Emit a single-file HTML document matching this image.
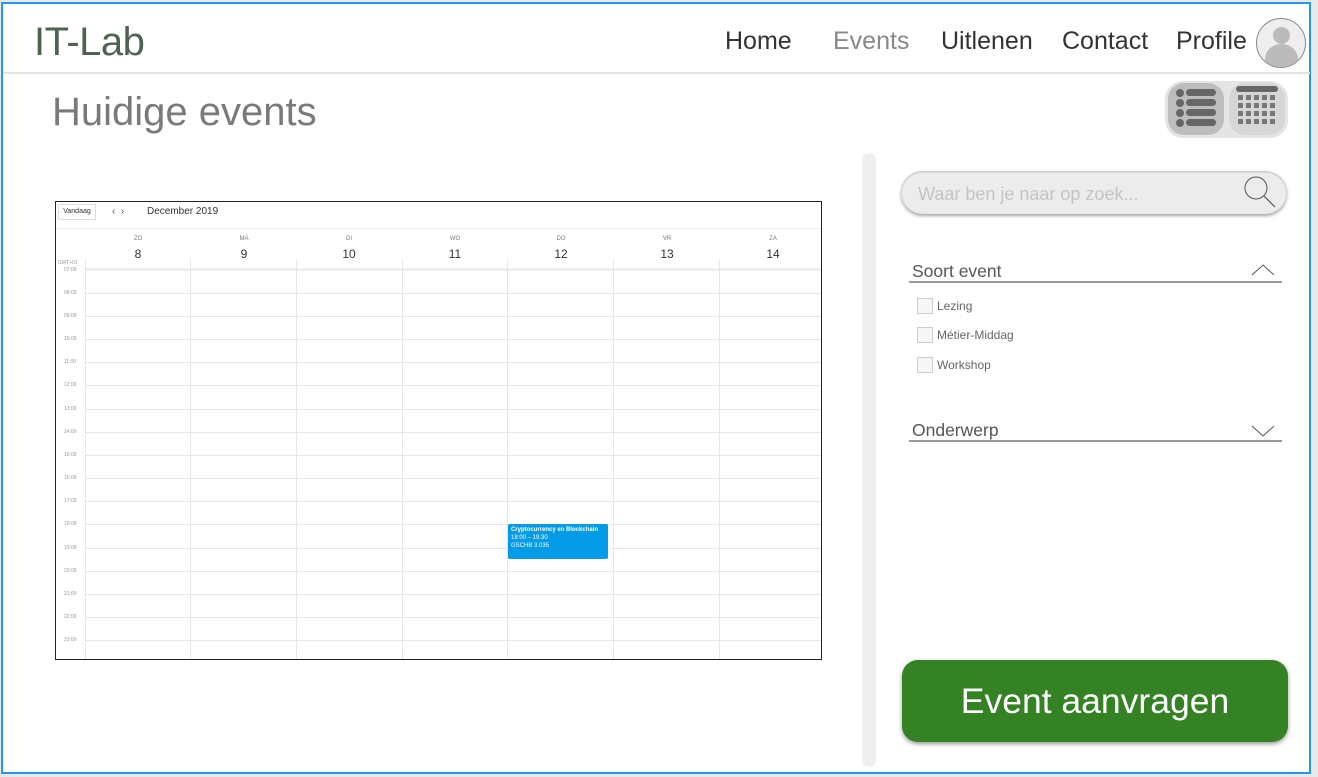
<!DOCTYPE html>
<html><head><meta charset="utf-8"><style>
*{margin:0;padding:0;box-sizing:border-box}
body{width:1318px;height:777px;background:#e9e9e9;font-family:"Liberation Sans",Roboto,sans-serif;position:relative;overflow:hidden}
.frame{position:absolute;left:1px;top:2px;width:1310px;height:772px;background:#fff;border:2px solid #2196f3}
.a{position:absolute}
.nav{font-size:25px;color:#333;top:27px}
.cal{left:55px;top:201px;width:767px;height:459px;border:1px solid #222;background:#fff}
.hl{position:absolute;left:30px;right:0;height:1px;background:#e6e6e6}
.vl{position:absolute;top:57px;bottom:0;width:1px;background:#e6e6e6}
.t{position:absolute;left:8px;font-size:5px;color:#999}
.dn{position:absolute;font-size:6px;color:#777;width:40px;text-align:center;top:34px}
.dd{position:absolute;font-size:12px;color:#333;width:40px;text-align:center;top:45px}
.cb{position:absolute;left:917px;width:16px;height:16px;border:1px solid #ccc;background:#f7f7f7}
.cl{position:absolute;left:937px;font-size:12px;color:#666}
</style></head><body>
<div class="frame"></div>
<div class="a" style="left:34px;top:20px;font-size:40px;color:#4f6450;letter-spacing:-0.5px;">IT-Lab</div>
<div class="a nav" style="left:725px">Home</div>
<div class="a nav" style="left:833px;color:#888">Events</div>
<div class="a nav" style="left:941px">Uitlenen</div>
<div class="a nav" style="left:1062px">Contact</div>
<div class="a nav" style="left:1176px">Profile</div>
<div class="a" style="left:1256px;top:18px;width:50px;height:50px;border-radius:50%;border:1px solid #888;background:#eee;overflow:hidden">
<div class="a" style="left:16px;top:8px;width:17px;height:17px;border-radius:50%;background:#bbb"></div>
<div class="a" style="left:8px;top:25px;width:33px;height:30px;border-radius:50% 50% 0 0;background:#bbb"></div></div>
<div class="a" style="left:3px;top:72px;width:1307px;height:2px;background:#e3e3e3"></div>
<div class="a" style="left:52px;top:90px;font-size:40px;color:#7a7a7a">Huidige events</div>
<div class="a" style="left:1165px;top:81px;width:123px;height:57px;border-radius:18px;background:#e4e4e4"></div>
<div class="a" style="left:1168px;top:83px;width:56px;height:52px;border-radius:16px;background:#bdbdbd"></div>
<div class="a" style="left:1229px;top:83px;width:56px;height:52px;border-radius:16px;background:#d6d6d6"></div>
<svg class="a" style="left:1172px;top:86px" width="50" height="46"><g fill="#666"><circle cx="8" cy="7" r="4"/><circle cx="8" cy="17" r="4"/><circle cx="8" cy="27" r="4"/><circle cx="8" cy="37" r="4"/><rect x="14" y="3" width="30" height="7" rx="3.5"/><rect x="14" y="13" width="30" height="7" rx="3.5"/><rect x="14" y="23" width="30" height="7" rx="3.5"/><rect x="14" y="33" width="30" height="7" rx="3.5"/></g></svg>
<svg class="a" style="left:1234px;top:86px" width="46" height="46"><rect x="2" y="0" width="42" height="6" rx="3" fill="#666"/><g fill="#777">
<rect x="4" y="9" width="5" height="5"/><rect x="12" y="9" width="5" height="5"/><rect x="20" y="9" width="5" height="5"/><rect x="28" y="9" width="5" height="5"/><rect x="36" y="9" width="5" height="5"/>
<rect x="4" y="17" width="5" height="5"/><rect x="12" y="17" width="5" height="5"/><rect x="20" y="17" width="5" height="5"/><rect x="28" y="17" width="5" height="5"/><rect x="36" y="17" width="5" height="5"/>
<rect x="4" y="25" width="5" height="5"/><rect x="12" y="25" width="5" height="5"/><rect x="20" y="25" width="5" height="5"/><rect x="28" y="25" width="5" height="5"/><rect x="36" y="25" width="5" height="5"/>
<rect x="4" y="33" width="5" height="5"/><rect x="12" y="33" width="5" height="5"/><rect x="20" y="33" width="5" height="5"/><rect x="28" y="33" width="5" height="5"/><rect x="36" y="33" width="5" height="5"/></g></svg>

<div class="a cal">
<div class="a" style="left:2px;top:2px;width:38px;height:16px;border:1px solid #ddd;font-size:7px;color:#333;text-align:center;line-height:14px">Vandaag</div>
<div class="a" style="left:56px;top:4px;font-size:10px;color:#555">‹ &nbsp;›</div>
<div class="a" style="left:91px;top:4px;font-size:10px;color:#333">December 2019</div>
<div class="a" style="left:0;right:0;top:26px;height:1px;background:#eee"></div>
<div class="dn" style="left:62px">ZO</div><div class="dd" style="left:62px">8</div>
<div class="dn" style="left:168px">MA</div><div class="dd" style="left:168px">9</div>
<div class="dn" style="left:273px">DI</div><div class="dd" style="left:273px">10</div>
<div class="dn" style="left:379px">WO</div><div class="dd" style="left:379px">11</div>
<div class="dn" style="left:485px">DO</div><div class="dd" style="left:485px">12</div>
<div class="dn" style="left:591px">VR</div><div class="dd" style="left:591px">13</div>
<div class="dn" style="left:697px">ZA</div><div class="dd" style="left:697px">14</div>
<div class="t" style="left:2px;top:58px">GMT+01</div>
<div class="a" style="left:30px;right:0;top:66px;height:3px;background:#eee"></div>
<div class="vl" style="left:29px"></div><div class="vl" style="left:134px"></div><div class="vl" style="left:240px"></div><div class="vl" style="left:346px"></div><div class="vl" style="left:451px"></div><div class="vl" style="left:557px"></div><div class="vl" style="left:663px"></div>
<div class="t" style="top:65px">07:00</div>
<div class="hl" style="top:91px"></div><div class="t" style="top:88px">08:00</div>
<div class="hl" style="top:114px"></div><div class="t" style="top:111px">09:00</div>
<div class="hl" style="top:137px"></div><div class="t" style="top:134px">10:00</div>
<div class="hl" style="top:160px"></div><div class="t" style="top:157px">11:00</div>
<div class="hl" style="top:183px"></div><div class="t" style="top:180px">12:00</div>
<div class="hl" style="top:207px"></div><div class="t" style="top:204px">13:00</div>
<div class="hl" style="top:230px"></div><div class="t" style="top:227px">14:00</div>
<div class="hl" style="top:253px"></div><div class="t" style="top:250px">15:00</div>
<div class="hl" style="top:276px"></div><div class="t" style="top:273px">16:00</div>
<div class="hl" style="top:299px"></div><div class="t" style="top:296px">17:00</div>
<div class="hl" style="top:322px"></div><div class="t" style="top:319px">18:00</div>
<div class="hl" style="top:346px"></div><div class="t" style="top:343px">19:00</div>
<div class="hl" style="top:369px"></div><div class="t" style="top:366px">20:00</div>
<div class="hl" style="top:392px"></div><div class="t" style="top:389px">21:00</div>
<div class="hl" style="top:415px"></div><div class="t" style="top:412px">22:00</div>
<div class="hl" style="top:438px"></div><div class="t" style="top:435px">23:00</div>
<div class="a" style="left:452px;top:322px;width:100px;height:35px;background:#039be5;border-radius:2px;color:#fff;font-size:6px;line-height:8px;padding:2px 3px"><b>Cryptocurrency en Blockchain</b><br>18:00 – 19:30<br>GSCHB 3.035</div>
</div>

<div class="a" style="left:862px;top:153px;width:14px;height:614px;border-radius:7px;background:#efefef"></div>
<div class="a" style="left:901px;top:171px;width:386px;height:43px;border-radius:22px;background:#ececec;box-shadow:0 2px 3px rgba(0,0,0,.35),inset 0 1px 2px rgba(0,0,0,.2)"></div>
<div class="a" style="left:918px;top:184px;font-size:18px;color:#c4c4c4">Waar ben je naar op zoek...</div>
<svg class="a" style="left:1240px;top:173px" width="40" height="36"><circle cx="16" cy="15" r="11" fill="none" stroke="#555" stroke-width="1"/><line x1="24" y1="23" x2="35" y2="34" stroke="#555" stroke-width="1.2"/></svg>
<div class="a" style="left:912px;top:261px;font-size:17.5px;color:#555">Soort event</div>
<svg class="a" style="left:1250px;top:263px" width="26" height="14"><polyline points="2,12 13,2 24,12" fill="none" stroke="#555" stroke-width="1"/></svg>
<div class="a" style="left:909px;top:281px;width:373px;height:2px;background:#9a9a9a"></div>
<div class="cb" style="top:298px"></div><div class="cl" style="top:299px">Lezing</div>
<div class="cb" style="top:327px"></div><div class="cl" style="top:328px">Métier-Middag</div>
<div class="cb" style="top:357px"></div><div class="cl" style="top:358px">Workshop</div>
<div class="a" style="left:912px;top:420px;font-size:17.5px;color:#555">Onderwerp</div>
<svg class="a" style="left:1250px;top:424px" width="26" height="14"><polyline points="2,2 13,12 24,2" fill="none" stroke="#555" stroke-width="1"/></svg>
<div class="a" style="left:909px;top:440px;width:373px;height:2px;background:#9a9a9a"></div>
<div class="a" style="left:902px;top:660px;width:386px;height:82px;border-radius:16px;background:#348224;box-shadow:0 2px 4px rgba(0,0,0,.4);color:#fff;font-size:35.5px;text-align:center;line-height:82px">Event aanvragen</div>
</body></html>
